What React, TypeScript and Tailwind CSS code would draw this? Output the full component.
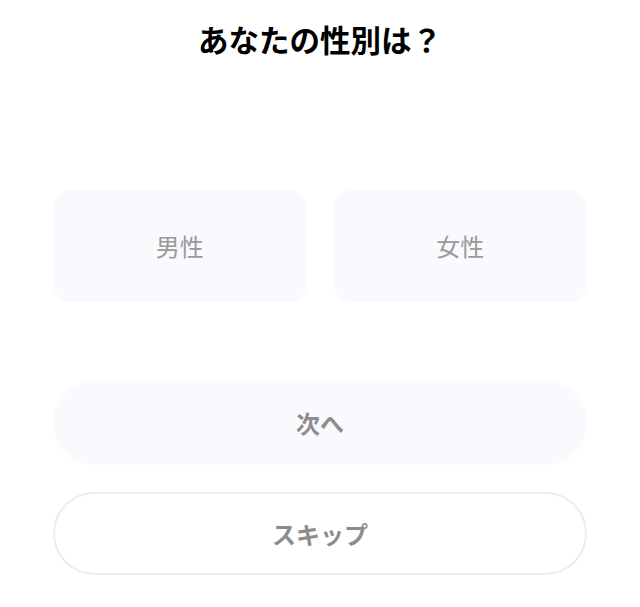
export default function App() {
  return (
    <div
      className="w-[640px] h-[607px] bg-white flex flex-col px-[53px]"
      style={{ fontFamily: '"Noto Sans CJK JP", "Noto Sans", sans-serif' }}
    >
      <h1 className="mt-[19px] h-[40px] flex items-center justify-center text-[30.5px] font-bold text-black leading-none">
        あなたの性別は？
      </h1>
      <div className="mt-[131px] grid grid-cols-2 gap-[27px]">
        <button className="h-[112px] rounded-[18px] bg-[#f9f9fe] flex items-center justify-center text-[24px] text-[#9a9a9a] leading-none">
          男性
        </button>
        <button className="h-[112px] rounded-[18px] bg-[#f9f9fe] flex items-center justify-center text-[24px] text-[#9a9a9a] leading-none">
          女性
        </button>
      </div>
      <button className="mt-[79px] h-[84px] rounded-full bg-[#f9f9fe] flex items-center justify-center text-[24px] font-bold text-[#8c8c8c] leading-none">
        次へ
      </button>
      <button className="mt-[27px] h-[83px] rounded-full bg-white border-2 border-[#ececec] flex items-center justify-center text-[24px] font-bold text-[#8c8c8c] leading-none">
        スキップ
      </button>
    </div>
  );
}
